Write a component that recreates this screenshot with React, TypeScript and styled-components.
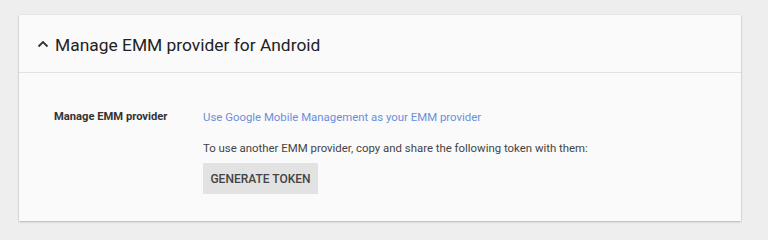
import styled, { createGlobalStyle } from "styled-components";

const GlobalStyle = createGlobalStyle`
  html, body {
    margin: 0;
    padding: 0;
    background: #eeeeee;
    font-family: Roboto, "Liberation Sans", Arial, sans-serif;
    color: #333;
  }
`;

const Page = styled.div`
  padding: 15px 27px 19px 19px;
  height: 240px;
  box-sizing: border-box;
`;

const Card = styled.section`
  background: #fafafa;
  box-shadow: 0 1px 2px rgba(0, 0, 0, 0.22), 0 0 1px rgba(0, 0, 0, 0.12);
  height: 206px;
  box-sizing: border-box;
`;

const Header = styled.header`
  display: flex;
  align-items: center;
  gap: 6px;
  height: 58px;
  padding: 0 18px;
  border-bottom: 1px solid #e2e2e2;
  box-sizing: border-box;
`;

const Title = styled.h2`
  margin: 0;
  font-size: 17.4px;
  font-weight: 400;
  color: #222;
  line-height: 1;
  padding-top: 4px;
`;

const Body = styled.div`
  display: grid;
  grid-template-columns: 149px 1fr;
  padding: 35px 35px 0;
`;

const Label = styled.div`
  font-size: 11.2px;
  font-weight: 700;
  color: #333;
  line-height: 18px;
`;

const Content = styled.div`
  display: flex;
  flex-direction: column;
  align-items: flex-start;
`;

const Link = styled.a`
  font-size: 11.4px;
  line-height: 18px;
  color: #6b8fd9;
  text-decoration: none;
`;

const Text = styled.p`
  margin: 13px 0 6px;
  font-size: 11.4px;
  line-height: 18px;
  color: #444;
`;

const Button = styled.button`
  height: 31px;
  width: 115px;
  padding: 0;
  border: none;
  border-radius: 1px;
  background: #e2e2e2;
  color: #444;
  font-family: Roboto, "Liberation Sans", Arial, sans-serif;
  font-size: 12px;
  font-weight: 500;
  text-transform: uppercase;
`;

const Chevron = () => (
  <svg width="12" height="12" viewBox="0 0 12 12" aria-hidden="true">
    <path d="M1.5 8.5 L6 4 L10.5 8.5" fill="none" stroke="#333" strokeWidth="1.8" />
  </svg>
);

export default function App() {
  return (
    <>
      <GlobalStyle />
      <Page>
        <Card>
          <Header>
            <Chevron />
            <Title>Manage EMM provider for Android</Title>
          </Header>
          <Body>
            <Label>Manage EMM provider</Label>
            <Content>
              <Link href="#">Use Google Mobile Management as your EMM provider</Link>
              <Text>To use another EMM provider, copy and share the following token with them:</Text>
              <Button>Generate token</Button>
            </Content>
          </Body>
        </Card>
      </Page>
    </>
  );
}
